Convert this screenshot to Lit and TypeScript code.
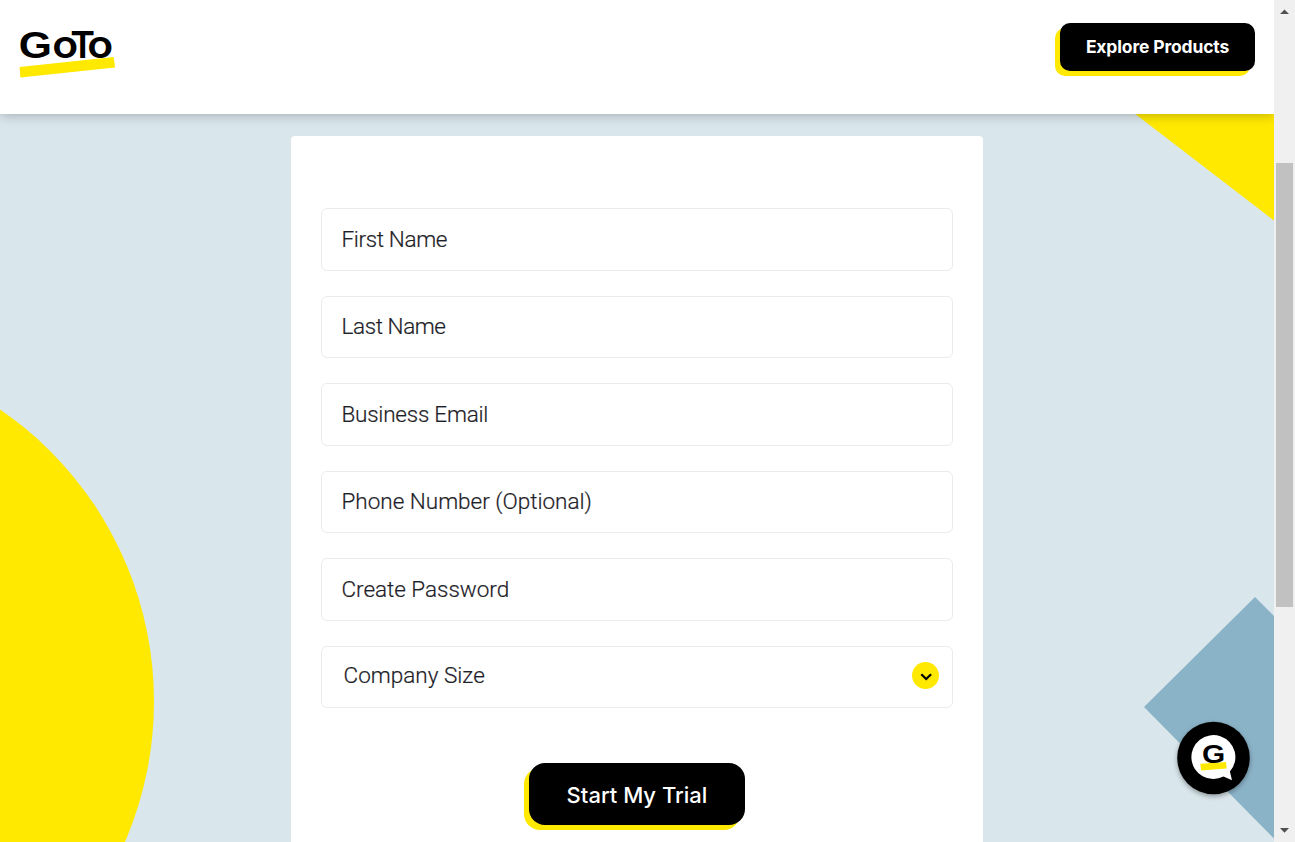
import { LitElement, html, css } from "lit";
import { customElement, property } from "lit/decorators.js";

@customElement("goto-logo")
class GotoLogo extends LitElement {
  static styles = css`
    :host { display: block; width: 96px; height: 50px; }
    svg { display: block; overflow: visible; }
    text { font-family: Inter, sans-serif; font-weight: 600; font-size: 37.5px; fill: #000; }
    .g { font-family: "Liberation Sans", sans-serif; font-weight: 700; font-size: 37.5px; }
    .o { font-size: 38.5px; }
  `;
  render() {
    return html`<svg width="96" height="50" viewBox="0 0 96 50">
      <path d="M-.4 38.1 93.7 28l1.4 10.6L.4 48.4Z" fill="#ffe900" />
      <text class="g" x="-1.2" y="29.2" textLength="33.2" lengthAdjust="spacingAndGlyphs">G</text>
      <text class="o" x="32.2" y="29.2" textLength="26" lengthAdjust="spacingAndGlyphs">o</text>
      <text x="50.3" y="29.2">T</text>
      <text class="o" x="67.2" y="29.2" textLength="26" lengthAdjust="spacingAndGlyphs">o</text>
    </svg>`;
  }
}

@customElement("form-field")
class FormField extends LitElement {
  @property({ type: Boolean }) select = false;
  static styles = css`
    :host { display: block; }
    .field {
      box-sizing: border-box; height: 62.5px; border: 1px solid #ebebeb; border-radius: 6px;
      padding: 0 13px 0 19.5px; display: flex; align-items: center; justify-content: space-between;
      font: 300 22.5px/30px Roboto, sans-serif; color: #1d2127; background: #fff; white-space: nowrap;
      -webkit-text-stroke: 0.2px #1d2127;
    }
    .label { padding-bottom: 0.6px; }
    .select { padding-left: 21.5px; }
    .select .label { padding-bottom: 3px; }
    .arrow { display: block; margin-bottom: 3px; }
  `;
  render() {
    return html`<div class="field ${this.select ? "select" : ""}">
      <span class="label"><slot></slot></span>
      ${this.select
        ? html`<svg class="arrow" width="27" height="27" viewBox="0 0 27 27">
            <circle cx="13.5" cy="13.5" r="13.5" fill="#ffe900" />
            <path d="M9.3 12.2 14.2 17l4.9-4.8" fill="none" stroke="#000" stroke-width="2.3" />
          </svg>`
        : ""}
    </div>`;
  }
}

const fields = [
  { label: "First Name", spacing: -0.35 },
  { label: "Last Name", spacing: -0.4 },
  { label: "Business Email", spacing: -0.23 },
  { label: "Phone Number (Optional)", spacing: 0 },
  { label: "Create Password", spacing: -0.03 },
  { label: "Company Size", spacing: 0.02, select: true },
];

@customElement("app-root")
class AppRoot extends LitElement {
  static styles = css`
    :host { display: block; }
    .window { display: flex; width: 1295px; height: 842px; overflow: hidden; }
    .page { position: relative; width: 1274px; display: flex; flex-direction: column; background: #d9e6eb; overflow: hidden; }
    header {
      position: relative; z-index: 2; box-sizing: border-box; height: 114px; flex: none; background: #fff;
      display: flex; justify-content: space-between; align-items: flex-start; padding: 23px 19px 0 20px;
      box-shadow: 0 0 12px rgba(0, 0, 0, 0.3);
    }
    .logo { margin-top: 6px; }
    button { border: 0; margin: 0; padding: 0; background: #000; color: #fff; white-space: nowrap; }
    .explore {
      width: 195px; height: 48px; border-radius: 10px; box-shadow: -5px 5px 0 #ffe900;
      font: 700 17.5px/48px Inter, sans-serif; letter-spacing: -0.15px;
    }
    .shapes { position: absolute; inset: 0; }
    main { position: relative; flex: 1; display: flex; justify-content: center; padding-top: 22px; }
    .card {
      box-sizing: border-box; width: 692px; height: 760px; flex: none; background: #fff; border-radius: 4px;
      padding: 72px 30px 0; display: flex; flex-direction: column; align-items: center;
    }
    .fields { align-self: stretch; display: flex; flex-direction: column; gap: 25px; }
    .start {
      box-sizing: border-box; margin-top: 55px; padding-top: 2px; width: 216px; height: 62px;
      border-radius: 16px; box-shadow: -5px 5px 0 #ffe900; font: 500 22px/60px Inter, sans-serif;
    }
    .chat { position: absolute; z-index: 3; left: 1167px; top: 712px; }
    .chat text { font-family: "Liberation Sans", sans-serif; font-weight: 700; font-size: 26.5px; }
    .scroll { width: 21px; background: #f0f0f0; }
    .scroll svg { display: block; }
  `;
  render() {
    return html`<div class="window">
      <div class="page">
        <svg class="shapes" width="1274" height="842" viewBox="0 0 1274 842">
          <circle cx="-200" cy="701.5" r="354" fill="#ffe900" />
          <path d="M1134 113H1274V220.5Z" fill="#ffe900" />
          <path d="M1255 597 1144 707 1274 838.5V616Z" fill="#8bb3c8" />
        </svg>
        <header>
          <goto-logo class="logo"></goto-logo>
          <button class="explore">Explore Products</button>
        </header>
        <main>
          <section class="card">
            <div class="fields">
              ${fields.map(
                (f) => html`<form-field ?select=${!!f.select}
                  ><span style="letter-spacing:${f.spacing}px">${f.label}</span></form-field
                >`
              )}
            </div>
            <button class="start">Start My Trial</button>
          </section>
        </main>
        <svg class="chat" width="94" height="94" viewBox="0 0 94 94">
          <defs>
            <filter id="shade" x="-20%" y="-20%" width="140%" height="140%">
              <feDropShadow dx="0" dy="2" stdDeviation="2.5" flood-opacity="0.35" />
            </filter>
          </defs>
          <circle cx="46.5" cy="46" r="36.3" fill="#000" filter="url(#shade)" />
          <path d="M62.9 59.6A22 22 0 1 0 56.5 64.6L65 68.3Z" fill="#fff" />
          <path d="M33.3 51.8 59 50l.7 6.6-25.6 2Z" fill="#ffe900" />
          <text x="35" y="50.8" textLength="23.2" lengthAdjust="spacingAndGlyphs">G</text>
        </svg>
      </div>
      <div class="scroll">
        <svg width="21" height="842" viewBox="0 0 21 842">
          <rect x="2" y="163" width="17" height="444" fill="#c1c1c1" />
          <path d="M6 14 10.5 9.5 15 14ZM6 828h9l-4.5 4.7Z" fill="#505050" />
        </svg>
      </div>
    </div>`;
  }
}
